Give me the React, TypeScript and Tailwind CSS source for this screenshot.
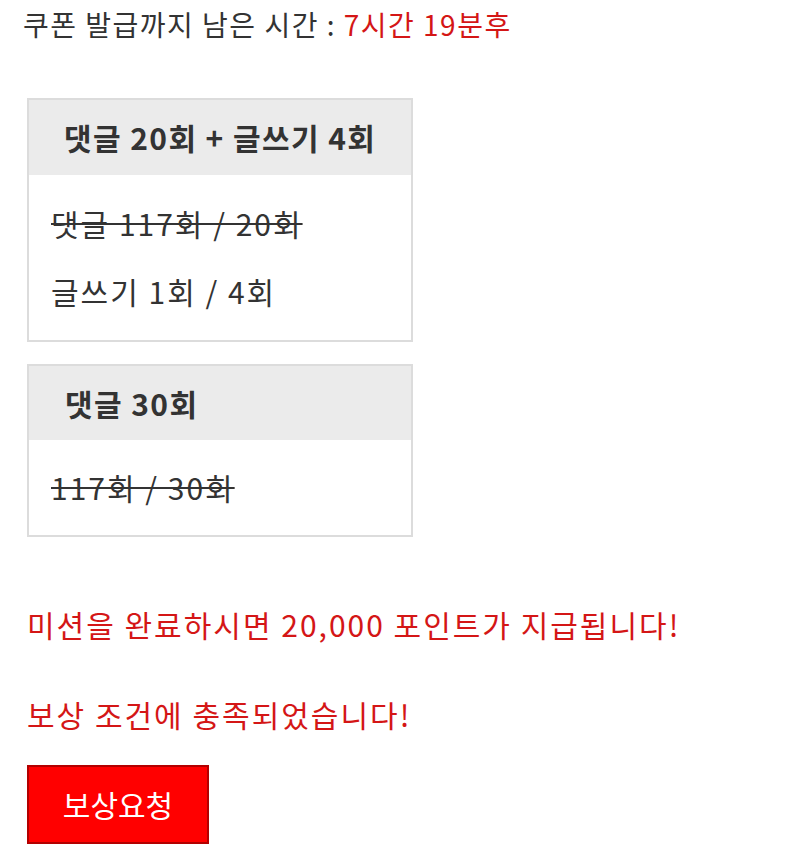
export default function App() {
  const font = "font-['Noto_Sans_CJK_KR','Noto_Sans',sans-serif]";
  return (
    <div className={`${font} bg-white w-[800px] h-[866px] px-[23px] pt-[4px] text-[#333]`}>
      <p className="text-[28px] leading-[40px] tracking-[1.5px]">
        쿠폰 발급까지 남은 시간 : <span className="text-[#d41616]">7시간 19분후</span>
      </p>

      <div className="mt-[54px] ml-[4px] w-[386px] border-2 border-[#dcdcdc]">
        <div className="bg-[#ebebeb] h-[75px] flex items-center pl-[35px] text-[30px] font-bold tracking-[1.4px]">
          댓글 20회 + 글쓰기 4회
        </div>
        <div className="pl-[22px] pt-[28px] pb-[29px] text-[30px] leading-[40px] tracking-[2px] flex flex-col gap-[28px]">
          <span className="line-through decoration-2">댓글 117회 / 20회</span>
          <span>글쓰기 1회 / 4회</span>
        </div>
      </div>

      <div className="mt-[22px] ml-[4px] w-[386px] border-2 border-[#dcdcdc]">
        <div className="bg-[#ebebeb] h-[74px] flex items-center pl-[36px] text-[30px] font-bold tracking-[1.4px]">
          댓글 30회
        </div>
        <div className="pl-[22px] pt-[27px] pb-[28px] text-[30px] leading-[40px] tracking-[2px]">
          <span className="line-through decoration-2">117회 / 30회</span>
        </div>
      </div>

      <p className="mt-[67px] ml-[4px] text-[30px] leading-[40px] tracking-[2px] text-[#d41616]">
        미션을 완료하시면 20,000 포인트가 지급됩니다!
      </p>
      <p className="mt-[50px] ml-[4px] text-[30px] leading-[40px] tracking-[2px] text-[#d41616]">
        보상 조건에 충족되었습니다!
      </p>
      <button className="mt-[31px] ml-[4px] w-[182px] h-[79px] bg-[#ff0000] border-2 border-[#b30000] text-white text-[30px]">
        보상요청
      </button>
    </div>
  );
}
